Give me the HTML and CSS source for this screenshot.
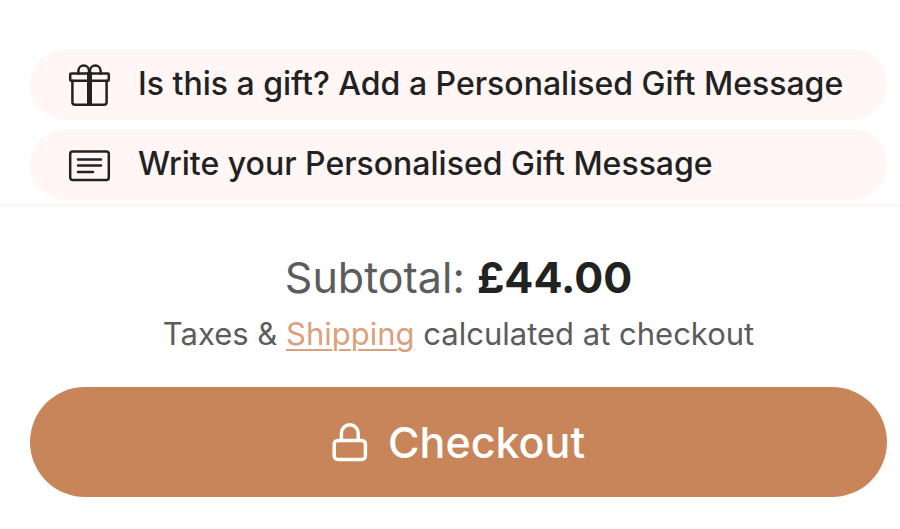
FILE: index.html
```html
<!DOCTYPE html>
<html lang="en-GB">
<head>
  <meta charset="UTF-8" />
  <meta name="viewport" content="width=device-width, initial-scale=1.0"/>
  <title>Your Basket</title>
  <link rel="stylesheet" href="styles.css">
</head>
<body>
  <main class="cart">
    <section class="gift-options">
      <button type="button" class="gift-option">
        <svg class="gift-icon" viewBox="0 0 44 44" aria-hidden="true">
          <rect x="3.2" y="11.5" width="38.6" height="7.2" rx="1"/>
          <path d="M5.4 18.7v21.5a2.5 2.5 0 0 0 2.5 2.5h29.2a2.5 2.5 0 0 0 2.5-2.5V18.7"/>
          <path d="M11.4 11.5V8.8a5.3 5.3 0 0 1 10.6 0v2.7"/>
          <path d="M23 11.5V8.8a5.3 5.3 0 0 1 10.6 0v2.7"/>
          <path class="ribbon" d="M22.5 10v32"/>
        </svg>
        <span>Is this a gift? Add a Personalised Gift Message</span>
      </button>
      <button type="button" class="gift-option">
        <svg class="gift-icon" viewBox="0 0 44 44" aria-hidden="true">
          <rect x="3.2" y="9.4" width="38.6" height="28.6" rx="2.5"/>
          <path d="M11 17.4h23M11 23.4h23M11 30h15"/>
        </svg>
        <span>Write your Personalised Gift Message</span>
      </button>
    </section>

    <section class="summary">
      <p class="subtotal">Subtotal: <strong>£44.00</strong></p>
      <p class="note">Taxes &amp; <a href="#shipping">Shipping</a> calculated at checkout</p>
      <button type="submit" class="checkout">
        <svg class="lock-icon" viewBox="0 0 36 40" aria-hidden="true">
          <rect x="2.2" y="18.4" width="31.2" height="19" rx="3.5"/>
          <path d="M9.4 18v-6.8a8.4 8.4 0 0 1 16.8 0V18"/>
        </svg>
        <span>Checkout</span>
      </button>
    </section>
  </main>
</body>
</html>
```
FILE: styles.css
```css
body {
  margin: 0;
  font-family: Inter, "Liberation Sans", sans-serif;
  background: #fff;
  color: #222;
}

button {
  border: none;
  font-family: inherit;
  cursor: pointer;
}

svg {
  flex-shrink: 0;
  fill: none;
  stroke: currentColor;
  stroke-linecap: round;
  stroke-linejoin: round;
}

.gift-options {
  display: flex;
  flex-direction: column;
  gap: 9px;
  padding: 49px 13px 4px 30px;
  border-bottom: 3px solid #fff6f5;
}

.gift-option {
  display: flex;
  align-items: center;
  gap: 27px;
  padding: 0 37px 1px;
  border-radius: 36px;
  background: #fff6f5;
  color: #222;
  font-size: 32px;
  font-weight: 500;
  line-height: 70px;
  text-align: left;
}

.gift-icon {
  width: 44px;
  height: 44px;
  stroke-width: 2.5;
}

.ribbon {
  stroke-width: 5;
  stroke-linecap: butt;
}

.summary {
  padding: 40px 13px 32px 30px;
  text-align: center;
  color: #5c5c5c;
}

.subtotal {
  margin: 0;
  font-size: 43px;
  line-height: 60px;
}

.subtotal strong {
  color: #222;
}

.note {
  margin: 0 0 27px;
  font-size: 31px;
  line-height: 53px;
}

.note a {
  color: #dba07d;
  text-decoration-thickness: 2px;
  text-underline-offset: 4px;
}

.checkout {
  display: flex;
  justify-content: center;
  align-items: center;
  gap: 20px;
  width: 100%;
  padding: 0;
  border-radius: 55px;
  background: #c88559;
  color: #fff;
  font-size: 43px;
  font-weight: 500;
  line-height: 110px;
}

.lock-icon {
  width: 36px;
  height: 40px;
  stroke-width: 3.5;
}
```
